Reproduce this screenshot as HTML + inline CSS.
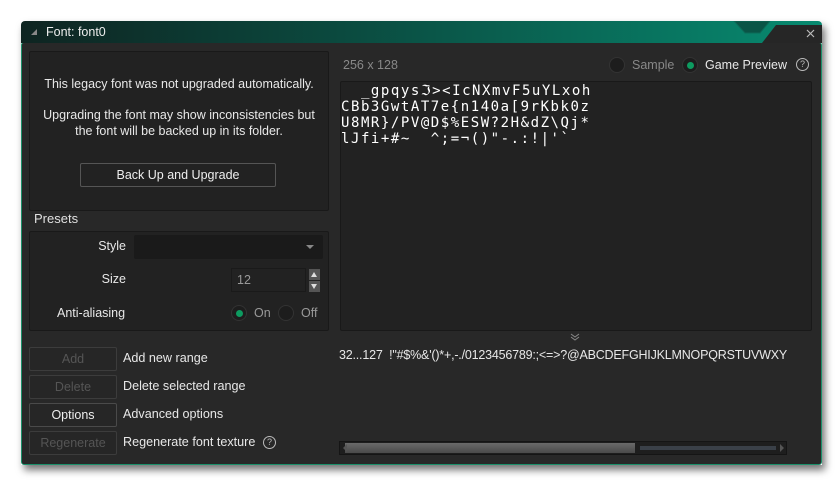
<!DOCTYPE html>
<html><head><style>
*{box-sizing:border-box;margin:0;padding:0}
body{width:840px;height:484px;background:#fff;position:relative;font-family:"Liberation Sans",sans-serif;font-size:12.5px;color:#ddd;overflow:hidden}
.abs{position:absolute}
.win{left:21px;top:21px;width:801px;height:444px;box-shadow:3px 5px 8px rgba(0,0,0,.55);border-radius:4px 4px 0 0}
.title{left:21px;top:21px;width:801px;height:22px;background:linear-gradient(90deg,#0e2421 0%,#0b4a3f 40%,#078a70 100%);border-radius:4px 4px 0 0}
.body{left:21px;top:42px;width:801px;height:423px;background:#282828;border:1px solid #1b8f6a;border-radius:3px}
.panel{background:#222;border:1px solid #191919;border-radius:2px}
.btn{left:29px;width:88px;height:24px;border:1px solid #4a4a4a;border-radius:2px;background:#262626;text-align:center;line-height:22px;color:#eee}
.dis{color:#555;border-color:#3c3c3c}
.lbl{left:123px;color:#e8e8e8;font-size:12.6px}
.mono{font-family:"DejaVu Sans Mono","Liberation Mono",monospace;font-size:14px;color:#fff;line-height:16px;white-space:pre;letter-spacing:1.55px}
.radio{width:16px;height:16px;border-radius:50%;background:#1d1d1d;border:1px solid #333}
.radio.on::after{content:"";position:absolute;left:4px;top:4px;width:7px;height:7px;border-radius:50%;background:#0d9b60}
.q{width:13px;height:13px;border:1px solid #bbb;border-radius:50%;font-size:9px;text-align:center;line-height:11px;color:#bbb}
</style></head><body>
<div class="abs win"></div>
<div class="abs body"></div>
<div class="abs title"></div>
<div class="abs" style="left:31px;top:29px;width:0;height:0;border-left:6px solid transparent;border-bottom:6px solid #888"></div>
<div class="abs" style="left:46px;top:25px;color:#eee;font-size:12.5px">Font: font0</div>
<svg class="abs" style="left:730px;top:21px" width="92" height="22"><polygon points="4,0 40,0 30,12 15,12" fill="#0a5446" stroke="#0c6a58"/><polygon points="32,22 46,4 92,4 92,22" fill="#262626"/><path d="M77,9 l7,7 M84,9 l-7,7" stroke="#bbb" stroke-width="1.2"/></svg>

<div class="abs panel" style="left:29px;top:51px;width:300px;height:160px"></div>
<div class="abs" style="left:29px;top:76px;width:300px;text-align:center;line-height:16px;color:#e8e8e8">This legacy font was not upgraded automatically.</div>
<div class="abs" style="left:29px;top:107px;width:300px;text-align:center;line-height:16px;color:#e8e8e8">Upgrading the font may show inconsistencies but<br>the font will be backed up in its folder.</div>
<div class="abs" style="left:80px;top:163px;width:196px;height:24px;border:1px solid #555;border-radius:2px;text-align:center;line-height:22px;color:#eee">Back Up and Upgrade</div>
<div class="abs" style="left:34px;top:211px;font-size:13px;color:#e0e0e0">Presets</div>
<div class="abs panel" style="left:29px;top:231px;width:300px;height:100px"></div>
<div class="abs" style="left:60px;top:239px;width:66px;text-align:right;color:#e8e8e8">Style</div>
<div class="abs" style="left:134px;top:235px;width:189px;height:24px;background:#1a1a1a;border-radius:2px"></div>
<div class="abs" style="left:306px;top:245px;border-left:4px solid transparent;border-right:4px solid transparent;border-top:4px solid #888"></div>
<div class="abs" style="left:60px;top:272px;width:66px;text-align:right;color:#e8e8e8">Size</div>
<div class="abs" style="left:231px;top:268px;width:75px;height:24px;background:#222;border:1px solid #1a1a1a;color:#999;padding-left:5px;line-height:22px">12</div>
<div class="abs" style="left:309px;top:269px;width:11px;height:11px;background:#555"></div>
<div class="abs" style="left:309px;top:281px;width:11px;height:11px;background:#555"></div>
<div class="abs" style="left:311px;top:272px;border-left:3.5px solid transparent;border-right:3.5px solid transparent;border-bottom:5px solid #ddd"></div>
<div class="abs" style="left:311px;top:284px;border-left:3.5px solid transparent;border-right:3.5px solid transparent;border-top:5px solid #ddd"></div>
<div class="abs" style="left:57px;top:306px;color:#e8e8e8">Anti-aliasing</div>
<div class="abs radio on" style="left:231px;top:305px"></div>
<div class="abs" style="left:254px;top:306px;color:#999">On</div>
<div class="abs radio" style="left:278px;top:305px"></div>
<div class="abs" style="left:301px;top:306px;color:#999">Off</div>

<div class="abs btn dis" style="top:347px">Add</div><div class="abs lbl" style="top:351px">Add new range</div>
<div class="abs btn dis" style="top:375px">Delete</div><div class="abs lbl" style="top:379px">Delete selected range</div>
<div class="abs btn" style="top:403px">Options</div><div class="abs lbl" style="top:407px">Advanced options</div>
<div class="abs btn dis" style="top:431px">Regenerate</div><div class="abs lbl" style="top:435px">Regenerate font texture</div>
<div class="abs q" style="left:263px;top:436px">?</div>

<div class="abs" style="left:343px;top:58px;color:#888">256 x 128</div>
<div class="abs radio" style="left:609px;top:57px"></div>
<div class="abs" style="left:632px;top:58px;color:#888">Sample</div>
<div class="abs radio on" style="left:682px;top:57px"></div>
<div class="abs" style="left:705px;top:58px;color:#e8e8e8">Game Preview</div>
<div class="abs q" style="left:796px;top:58px">?</div>
<div class="abs panel" style="left:340px;top:81px;width:472px;height:250px"></div>
<div class="abs mono" style="left:341px;top:83px">  _gpqysℑ&gt;&lt;IcNXmvF5uYLxoh
CBb3GwtAT7e{n140a[9rKbk0z
U8MR}/PV@D$%ESW?2H&amp;dZ\Qj*
lJfi+#~  ^;=¬()"-.:!|'`</div>
<svg class="abs" style="left:570px;top:333px" width="10" height="8"><path d="M1,1 l4,3 l4,-3 M1,4 l4,3 l4,-3" stroke="#888" fill="none"/></svg>
<div class="abs" style="left:339px;top:348px;color:#e8e8e8;white-space:nowrap;width:448px;overflow:hidden;font-size:12.5px;letter-spacing:-0.2px">32...127 &nbsp;!"#$%&amp;'()*+,-./0123456789:;&lt;=&gt;?@ABCDEFGHIJKLMNOPQRSTUVWXYZ[</div>
<div class="abs" style="left:339px;top:441px;width:448px;height:14px;background:#1e1e1e;border:1px solid #151515"></div>
<div class="abs" style="left:345px;top:443px;width:290px;height:10px;background:linear-gradient(#6a6a6a,#4a4a4a)"></div>
<div class="abs" style="left:640px;top:446px;width:136px;height:4px;background:#3a4048"></div>
<div class="abs" style="left:343px;top:444px;border-top:4px solid transparent;border-bottom:4px solid transparent;border-right:4px solid #555"></div>
<div class="abs" style="left:780px;top:444px;border-top:4px solid transparent;border-bottom:4px solid transparent;border-left:4px solid #555"></div>
</body></html>
